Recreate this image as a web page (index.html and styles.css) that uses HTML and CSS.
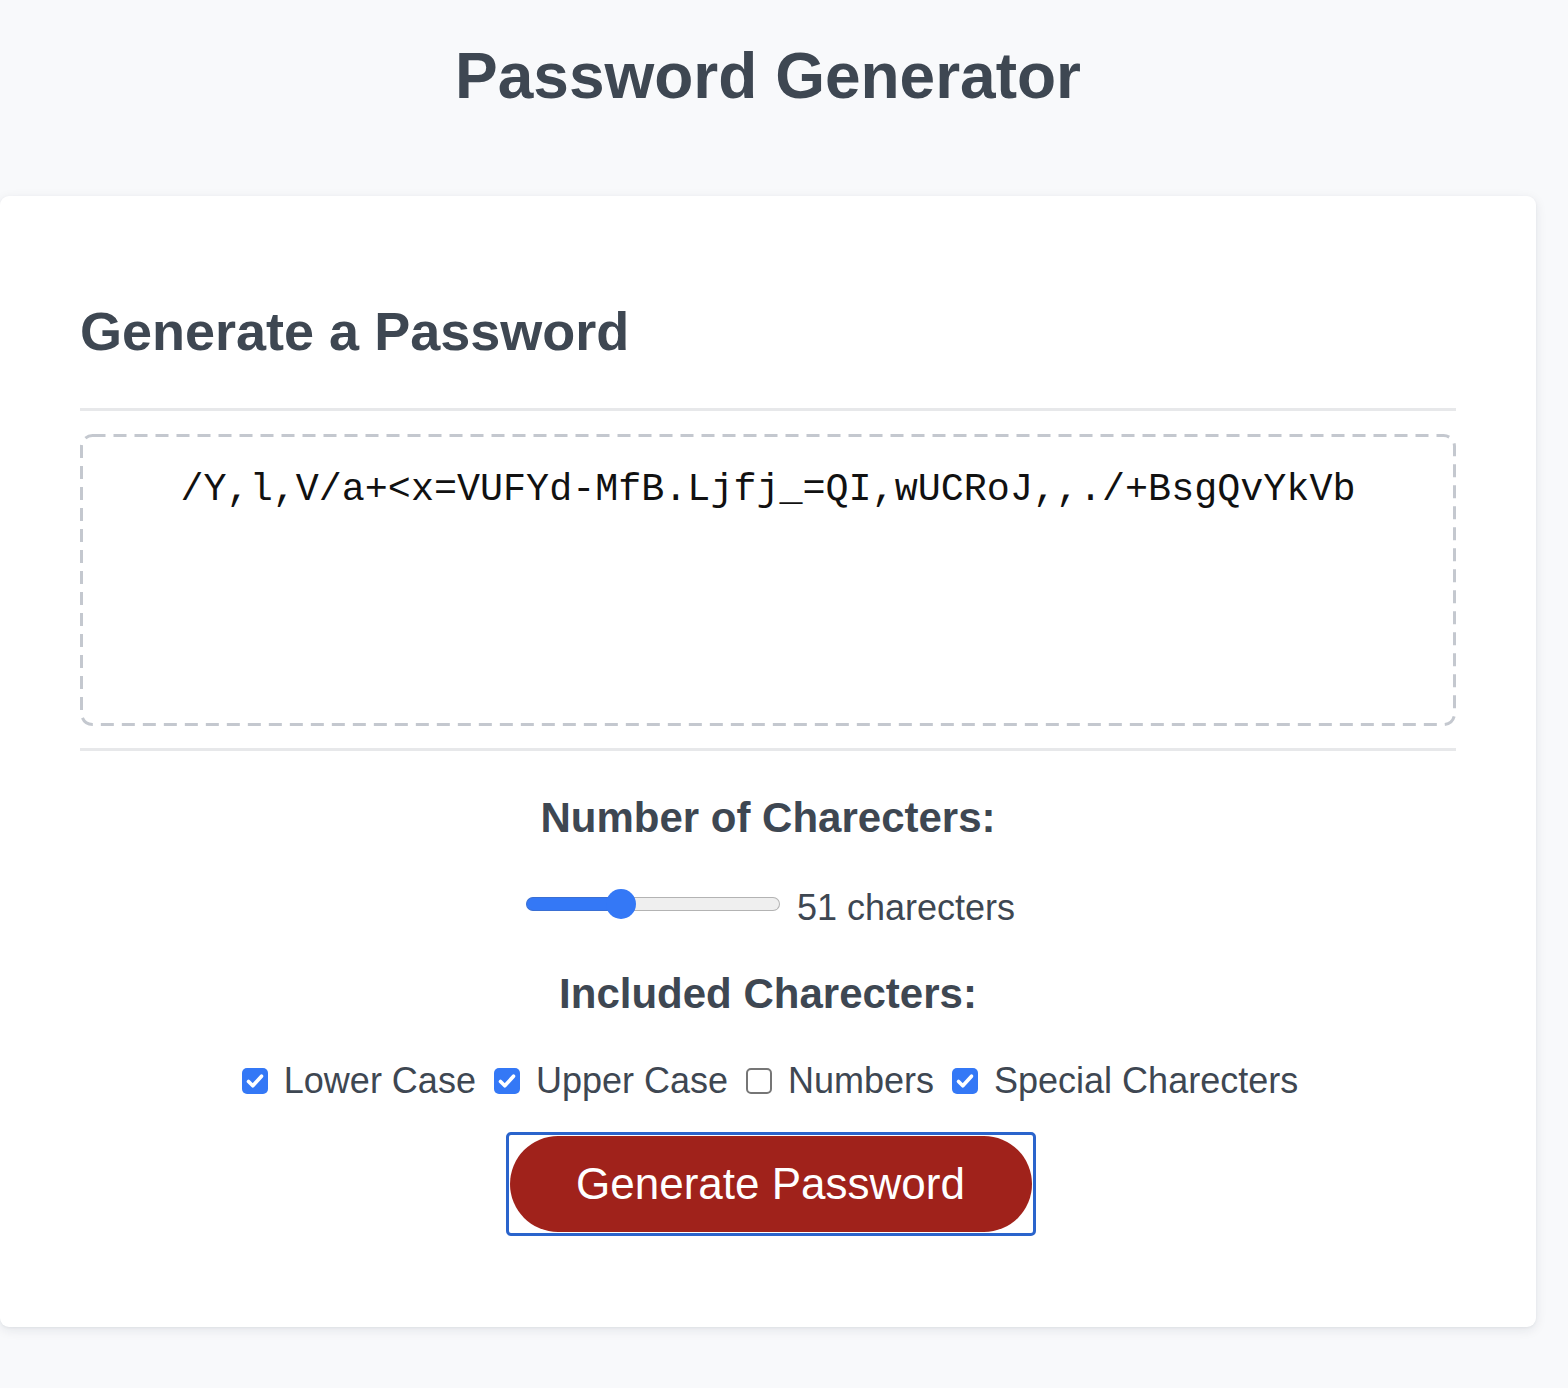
FILE: index.html
```html
<!DOCTYPE html>
<html lang="en">
<head>
<meta charset="utf-8">
<title>Password Generator</title>
<link rel="stylesheet" href="styles.css">
</head>
<body>
<div class="page">
  <h1 class="title">Password Generator</h1>
  <main class="card">
    <h2 class="card-title">Generate a Password</h2>
    <hr class="divider divider-top">
    <div class="output">
      <svg class="output-border" width="1376" height="292" viewBox="0 0 1376 292" aria-hidden="true"><rect x="1.5" y="1.5" width="1373" height="289" rx="11" ry="11" fill="none" stroke="#c4c8cf" stroke-width="3" stroke-dasharray="13 8"/></svg>
      <span class="output-text">/Y,l,V/a+&lt;x=VUFYd-MfB.Ljfj_=QI,wUCRoJ,,./+BsgQvYkVb</span>
    </div>
    <hr class="divider divider-bottom">
    <h3 class="section-title section-length">Number of Charecters:</h3>
    <div class="slider-row">
      <div class="slider">
        <span class="slider-fill" style="width: 95px"></span>
        <span class="slider-thumb"></span>
        <span class="slider-rest"></span>
      </div>
      <span class="slider-value">51 charecters</span>
    </div>
    <h3 class="section-title section-included">Included Charecters:</h3>
    <div class="options">
      <label class="option">
        <span class="box checked"><svg viewBox="0 0 26 26" width="26" height="26"><path d="M6.5 13.5 L10.8 17.8 L19.5 8.2" fill="none" stroke="#fff" stroke-width="3.6" stroke-linecap="round" stroke-linejoin="round"/></svg></span>
        <span class="option-text">Lower Case</span>
      </label>
      <label class="option">
        <span class="box checked"><svg viewBox="0 0 26 26" width="26" height="26"><path d="M6.5 13.5 L10.8 17.8 L19.5 8.2" fill="none" stroke="#fff" stroke-width="3.6" stroke-linecap="round" stroke-linejoin="round"/></svg></span>
        <span class="option-text">Upper Case</span>
      </label>
      <label class="option">
        <span class="box"></span>
        <span class="option-text">Numbers</span>
      </label>
      <label class="option">
        <span class="box checked"><svg viewBox="0 0 26 26" width="26" height="26"><path d="M6.5 13.5 L10.8 17.8 L19.5 8.2" fill="none" stroke="#fff" stroke-width="3.6" stroke-linecap="round" stroke-linejoin="round"/></svg></span>
        <span class="option-text">Special Charecters</span>
      </label>
    </div>
    <div class="actions">
      <span class="focus-ring"><button class="generate" type="button">Generate Password</button></span>
    </div>
  </main>
</div>
</body>
</html>
```
FILE: styles.css
```css
html, body {
  margin: 0;
  padding: 0;
}

body {
  background: #f8f9fb;
  color: #3e4752;
  font-family: "Liberation Sans", Arial, Helvetica, sans-serif;
  min-height: 1388px;
}

.page {
  width: 1536px;
}

.title {
  margin: 0;
  padding-top: 36px;
  height: 80px;
  font-size: 64px;
  line-height: 80px;
  font-weight: 700;
  text-align: center;
  margin-bottom: 80px;
}

.card {
  background: #ffffff;
  border-radius: 9px;
  box-shadow: 0 3px 12px rgba(20, 30, 50, 0.09), 0 1px 3px rgba(20, 30, 50, 0.05);
  padding: 0 80px 91px 80px;
  display: flex;
  flex-direction: column;
  align-items: stretch;
}

.card-title {
  margin: 103px 0 0;
  font-size: 54px;
  line-height: 64px;
  font-weight: 700;
}

.divider {
  border: 0;
  height: 3px;
  background: #e7e8ea;
  margin: 0;
}

.divider-top {
  margin-top: 45px;
}

.output {
  position: relative;
  margin-top: 23px;
  height: 292px;
  box-sizing: border-box;
  padding: 33px 20px 0;
  font-family: "Liberation Mono", "Courier New", monospace;
  font-size: 38.4px;
  line-height: 46px;
  color: #111111;
  text-align: center;
}

.output-border {
  position: absolute;
  left: 0;
  top: 0;
  display: block;
}

.output-text {
  position: relative;
}

.divider-bottom {
  margin-top: 22px;
}

.section-title {
  margin: 0;
  font-size: 42px;
  line-height: 48px;
  font-weight: 700;
  text-align: center;
}

.section-length {
  margin-top: 43px;
}

.slider-row {
  margin-top: 40px;
  display: flex;
  justify-content: center;
  align-items: flex-start;
  gap: 17px;
  padding-left: 5px;
}

.slider {
  margin-top: 7px;
  width: 254px;
  height: 30px;
  display: flex;
  align-items: center;
}

.slider-fill {
  height: 14px;
  background: #3478f6;
  border-radius: 7px 0 0 7px;
  box-sizing: border-box;
  border: 1px solid #3a6fd3;
  border-right: 0;
}

.slider-thumb {
  position: relative;
  z-index: 1;
  width: 30px;
  height: 30px;
  border-radius: 50%;
  background: #3478f6;
  margin: 0 -15px;
  flex: none;
}

.slider-rest {
  flex: 1;
  height: 14px;
  background: #efefef;
  border: 1px solid #b3b3b3;
  border-left: 0;
  box-sizing: border-box;
  border-radius: 0 7px 7px 0;
}

.slider-value {
  margin-top: 4px;
  font-size: 36px;
  line-height: 44px;
}

.section-included {
  margin-top: 40px;
}

.options {
  margin-top: 41px;
  display: flex;
  justify-content: center;
  align-items: center;
  gap: 18px;
  padding-left: 4px;
}

.option {
  display: flex;
  align-items: center;
  gap: 16px;
}

.box {
  width: 26px;
  height: 26px;
  box-sizing: border-box;
  border: 2px solid #767676;
  border-radius: 5px;
  background: #ffffff;
  display: flex;
  align-items: center;
  justify-content: center;
  flex: none;
}

.box.checked {
  border: 0;
  background: #3478f6;
}

.box svg {
  display: block;
}

.option-text {
  font-size: 36px;
  line-height: 44px;
}

.actions {
  margin-top: 29px;
  display: flex;
  justify-content: center;
}

.focus-ring {
  display: inline-flex;
  border: 3px solid #2a64cc;
  border-radius: 5px;
  padding: 1px;
  margin-left: 5px;
}

.generate {
  width: 522px;
  height: 96px;
  border: 0;
  border-radius: 48px;
  background: #a0221b;
  color: #ffffff;
  font-family: "Liberation Sans", Arial, Helvetica, sans-serif;
  font-size: 44px;
  line-height: 96px;
  padding: 0;
  cursor: pointer;
}
```
